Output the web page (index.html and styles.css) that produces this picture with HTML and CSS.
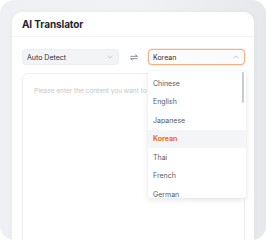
FILE: index.html
```html
<!DOCTYPE html>
<html lang="en">

<head>
  <meta charset="UTF-8">
  <meta name="viewport" content="width=device-width, initial-scale=1.0">
  <title>AI Translator</title>

  <link rel="stylesheet" href="styles.css">
</head>

<body>
  <section class="frame">
    <div class="card">
      <header class="card-head">
        <h1>AI Translator</h1>
      </header>

      <div class="card-body">
        <div class="lang-row">
          <div class="select">
            <span>Auto Detect</span>
            <svg class="chev" viewBox="0 0 8 5" width="6" height="4">
              <path d="M1 1l3 3 3-3" fill="none" stroke="currentColor" stroke-width="1" stroke-linecap="round" stroke-linejoin="round" />
            </svg>
          </div>

          <div class="swap">
            <svg viewBox="0 0 10 8" width="8" height="7">
              <path d="M1 2.5h8M7 0.8l2 1.7M9 5.5H1M3 7.2L1 5.5" fill="none" stroke="currentColor" stroke-width="1" stroke-linecap="round" />
            </svg>
          </div>

          <div class="select open">
            <span>Korean</span>
            <svg class="chev" viewBox="0 0 8 5" width="6" height="4">
              <path d="M1 4l3-3 3 3" fill="none" stroke="currentColor" stroke-width="1" stroke-linecap="round" stroke-linejoin="round" />
            </svg>
          </div>
        </div>

        <div class="input-box">
          <p class="placeholder">Please enter the content you want to translate</p>
        </div>
      </div>
    </div>

    <div class="dropdown">
      <ul>
        <li>Chinese</li>
        <li>English</li>
        <li>Japanese</li>
        <li class="active">Korean</li>
        <li>Thai</li>
        <li>French</li>
        <li>German</li>
      </ul>
      <div class="scroll-thumb"></div>
    </div>
  </section>
</body>

</html>
```

FILE: styles.css
```css
* {
  margin: 0;
  padding: 0;
  box-sizing: border-box;
}

body {
  background: #fff;
  font-family: Inter, "Noto Sans", sans-serif;
}

.frame {
  position: relative;
  width: 266px;
  height: 240px;
  border-radius: 14px;
  background: linear-gradient(90deg, #eff0f3 0%, #f1f2f5 50%, #e6e8ec 100%);
  padding: 12px 12px 0;
  overflow: hidden;
}

.card {
  background: #fff;
  border-radius: 10px 10px 0 0;
  height: 240px;
  box-shadow: 0 0 6px rgba(0, 0, 0, 0.04);
}

.card-head {
  height: 25px;
  padding: 0 10px;
  display: flex;
  align-items: center;
  border-bottom: 1px solid #f2f3f5;
}

.card-head h1 {
  font-size: 10px;
  font-weight: 700;
  color: #1f2430;
  letter-spacing: -0.1px;
}

.card-body {
  padding: 12px 9px 0 10px;
}

.lang-row {
  display: grid;
  grid-template-columns: 97px 1fr 97px;
  align-items: center;
}

.select {
  height: 16px;
  border-radius: 4px;
  background: #f3f4f6;
  border: 1px solid #eceef1;
  padding: 0 5px 0 4px;
  display: flex;
  align-items: center;
  justify-content: space-between;
  font-size: 7px;
  color: #2b2f36;
}

.select.open {
  background: #fbfbfc;
  border-color: #f6b186;
  box-shadow: 0 0 0 0.5px #fbd5bd;
}

.chev {
  color: #b3b8c0;
}

.swap {
  display: flex;
  justify-content: center;
  color: #6b7280;
}

.input-box {
  margin-top: 8px;
  height: 200px;
  border: 1px solid #eceef0;
  border-radius: 6px;
  padding: 13px 11px;
  overflow: hidden;
}

.placeholder {
  font-size: 6.5px;
  color: #c2c5cb;
  white-space: nowrap;
}

.dropdown {
  position: absolute;
  top: 71px;
  left: 148px;
  width: 98px;
  height: 127px;
  background: #fff;
  border-radius: 3px;
  box-shadow: 0 2px 6px rgba(0, 0, 0, 0.1), 0 0 1px rgba(0, 0, 0, 0.08);
  overflow: hidden;
}

.dropdown ul {
  list-style: none;
  padding-top: 3px;
}

.dropdown li {
  height: 18.5px;
  display: flex;
  align-items: center;
  padding-left: 5px;
  font-size: 7px;
  color: #555a63;
}

.dropdown li.active {
  background: #f4f5f7;
  color: #f26a1b;
  font-weight: 700;
}

.scroll-thumb {
  position: absolute;
  top: 1px;
  right: 2px;
  width: 2.5px;
  height: 31px;
  border-radius: 2px;
  background: #c9ccd1;
}
```
